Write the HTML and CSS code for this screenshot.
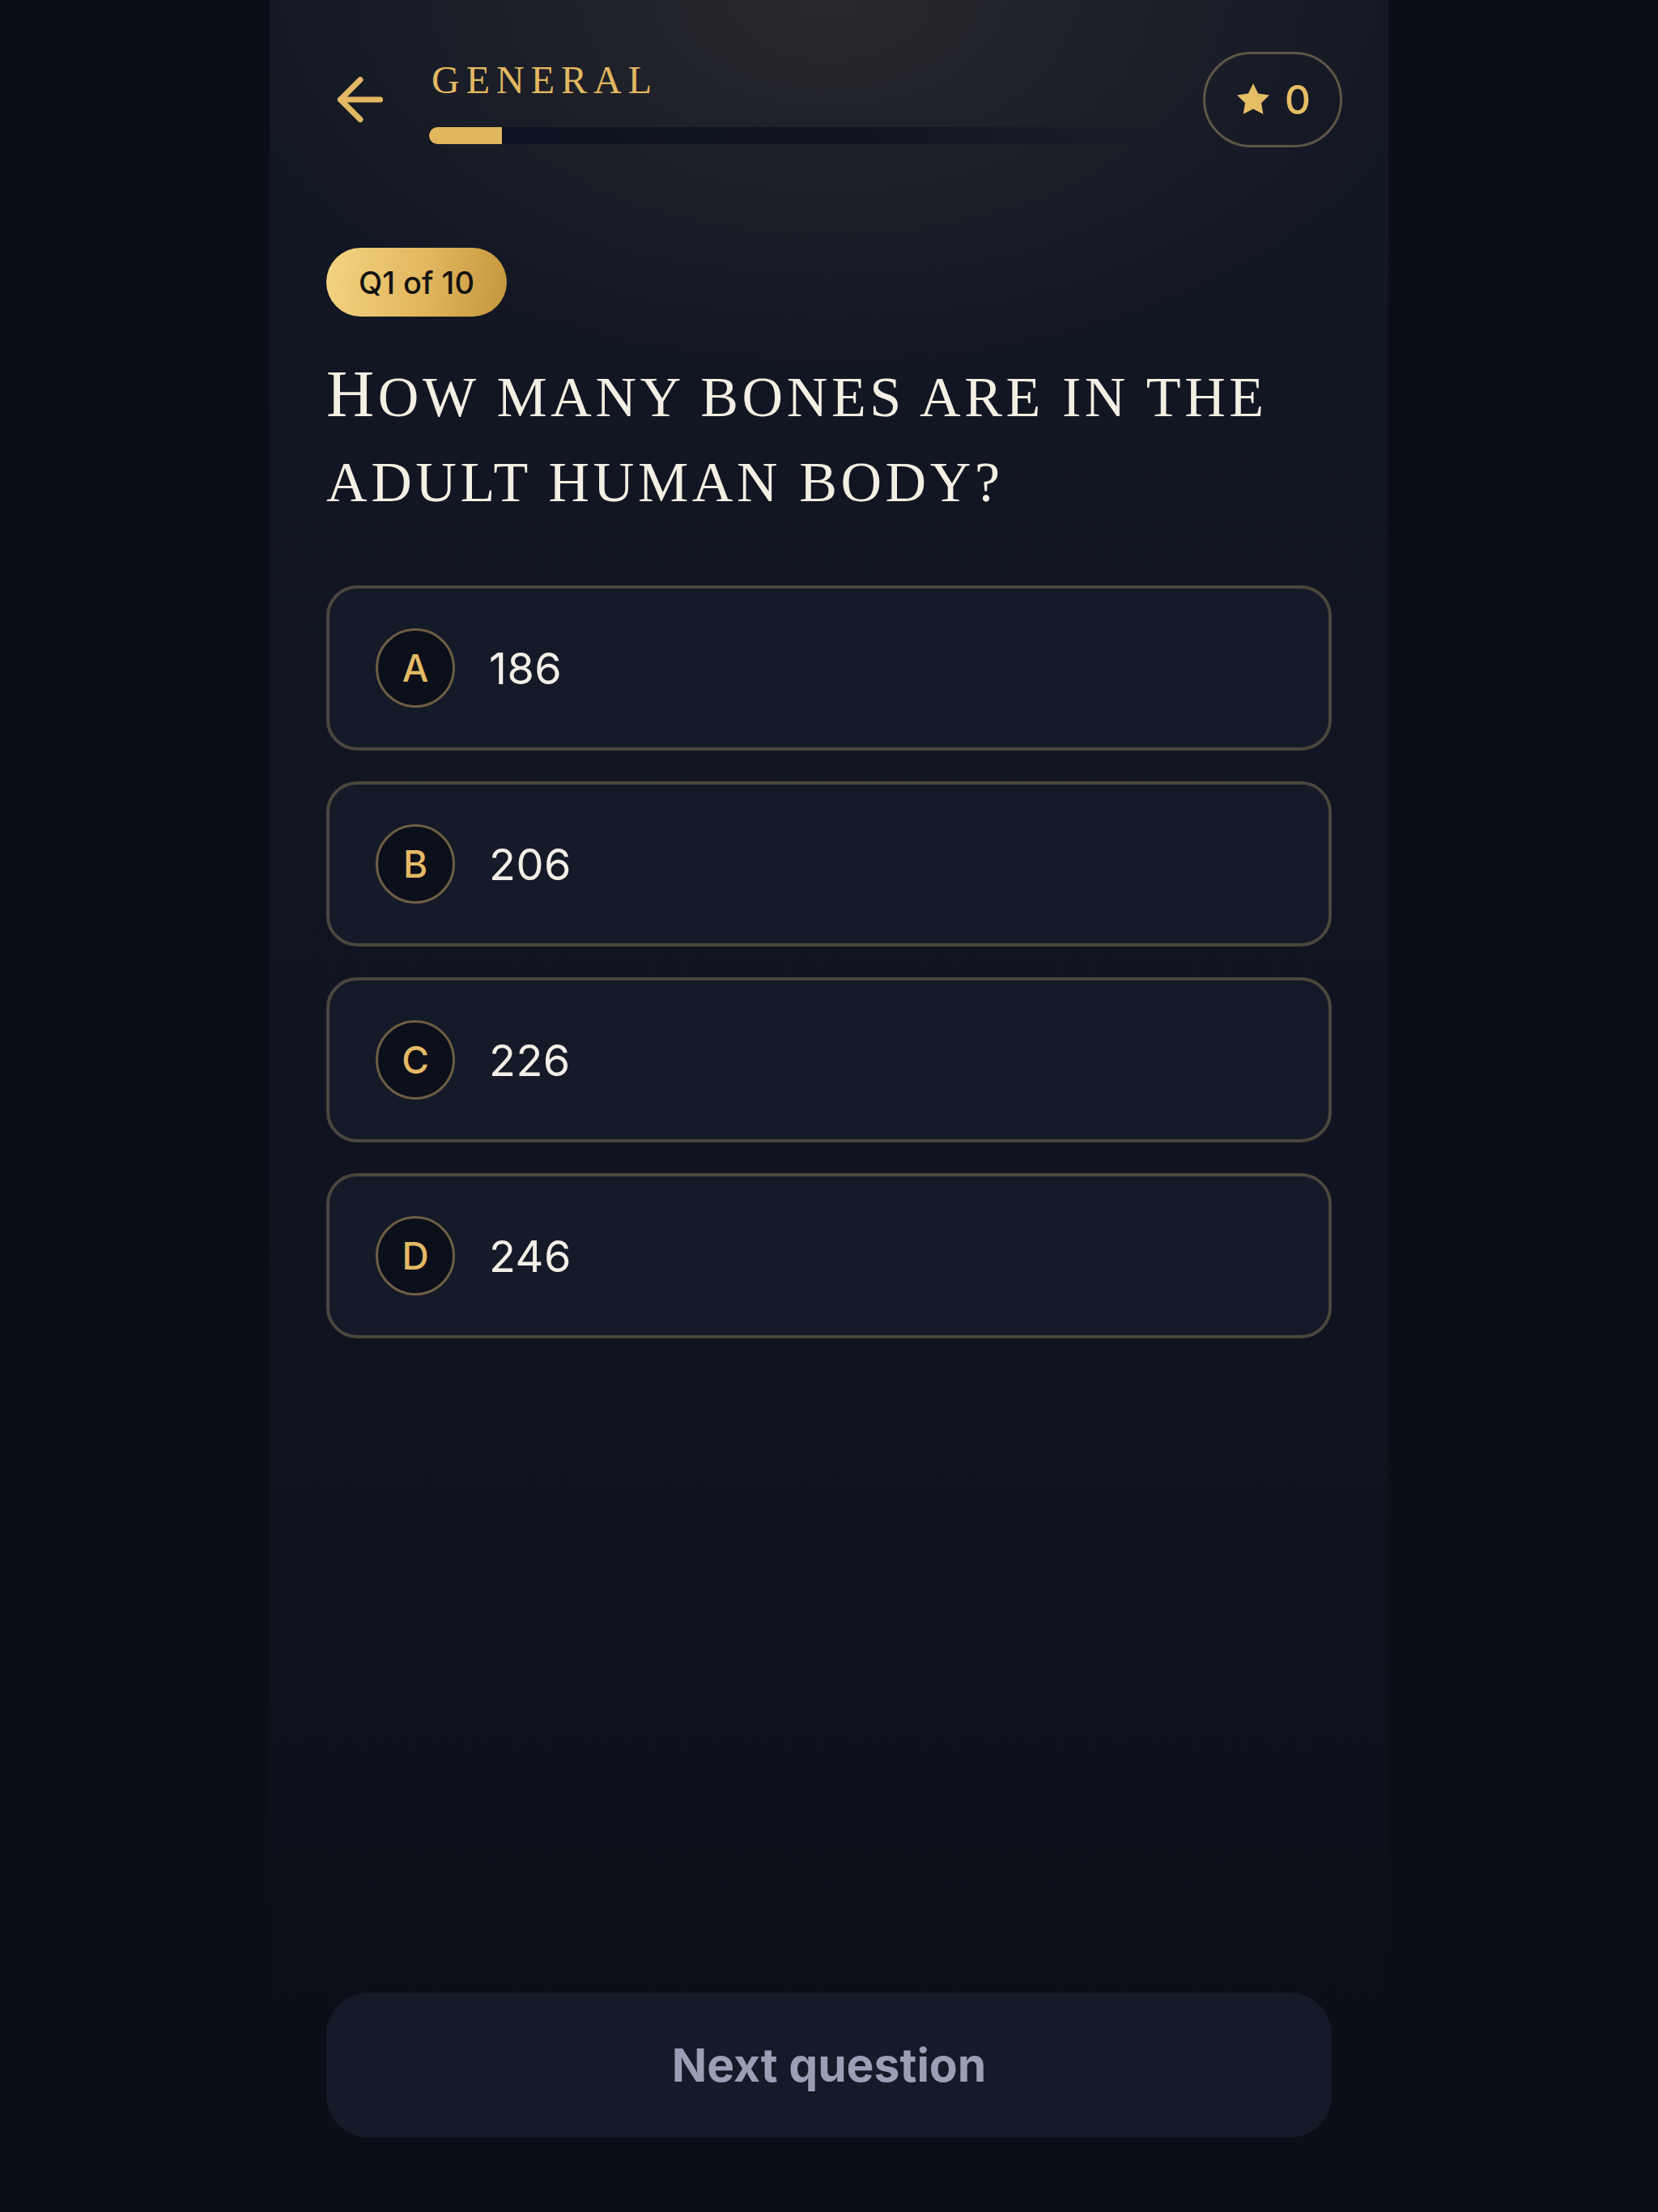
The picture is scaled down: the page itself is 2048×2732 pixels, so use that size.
FILE: index.html
```html
<!DOCTYPE html>
<html lang="en">
<head>
<meta charset="utf-8">
<title>Quiz</title>
<link rel="stylesheet" href="styles.css">
</head>
<body>
<div class="page">
  <main class="column">
    <header class="topbar">
      <button class="back" aria-label="Back">
        <svg viewBox="0 0 24 24" width="84" height="84" fill="none" stroke="currentColor" stroke-width="2" stroke-linecap="round" stroke-linejoin="round"><path d="M19 12H5"/><path d="M12 19l-7-7 7-7"/></svg>
      </button>
      <div class="title-block">
        <div class="category">GENERAL</div>
        <div class="progress"><div class="progress-fill" style="width: 90px"></div></div>
      </div>
      <div class="score">
        <svg viewBox="0 0 24 24" width="48" height="48"><polygon fill="currentColor" points="12,2 15.09,8.26 22,9.27 17,14.14 18.18,21.02 12,17.77 5.82,21.02 7,14.14 2,9.27 8.91,8.26"/></svg>
        <span class="score-num">0</span>
      </div>
    </header>

    <section class="content">
      <div class="badge">Q1 of 10</div>
      <h1 class="question">How many bones are in the adult human body?</h1>
      <div class="options">
        <div class="option"><span class="letter">A</span><span class="answer">186</span></div>
        <div class="option"><span class="letter">B</span><span class="answer">206</span></div>
        <div class="option"><span class="letter">C</span><span class="answer">226</span></div>
        <div class="option"><span class="letter">D</span><span class="answer">246</span></div>
      </div>
    </section>

    <div class="footer">
      <button class="next">Next question</button>
    </div>
  </main>
</div>
</body>
</html>
```

FILE: styles.css
```css
* { box-sizing: border-box; }

html, body {
  margin: 0;
  padding: 0;
  background: #0b0e17;
}

body {
  font-family: Inter, "Noto Sans", sans-serif;
  color: #f1ede4;
}

.page {
  display: flex;
  justify-content: center;
  min-height: 2732px;
}

.column {
  width: 1382px;
  min-height: 2732px;
  display: flex;
  flex-direction: column;
  background:
    radial-gradient(ellipse 760px 460px at 50% 0, rgba(58, 55, 52, 0.55), rgba(58, 55, 52, 0) 100%),
    linear-gradient(to bottom, #121724 0%, #111522 40%, #0f131e 65%, #0b0e17 92%);
}

.topbar {
  display: flex;
  align-items: center;
  padding: 64px 57px 0 70px;
}

.back {
  width: 84px;
  height: 84px;
  padding: 0;
  border: 0;
  background: none;
  color: #e3b862;
  display: flex;
  align-items: center;
  justify-content: center;
  flex: none;
}

.title-block {
  flex: 1;
  margin-left: 43px;
  margin-right: 40px;
  padding-top: 7px;
  display: flex;
  flex-direction: column;
  gap: 34px;
}

.category {
  font-family: "Liberation Serif", "Times New Roman", serif;
  font-size: 48px;
  line-height: 48px;
  letter-spacing: 8px;
  color: #e3b862;
  padding-left: 3px;
}

.progress {
  height: 21px;
  background: linear-gradient(to right, rgba(10, 15, 30, 0.85) 0%, rgba(10, 15, 30, 0.7) 60%, rgba(10, 15, 30, 0) 100%);
}

.progress-fill {
  height: 100%;
  background: #e1b75e;
  border-radius: 11px 0 0 11px;
}

.score {
  flex: none;
  height: 118px;
  border: 3px solid #5e5647;
  border-radius: 59px;
  padding: 0 36px 0 35px;
  display: flex;
  align-items: center;
  gap: 15px;
  color: #e5bd64;
}

.score-num {
  font-size: 50px;
  font-weight: 500;
  line-height: 1;
}

.content {
  padding: 124px 70px 0;
  display: flex;
  flex-direction: column;
  align-items: flex-start;
}

.badge {
  height: 85px;
  padding: 0 40px;
  border-radius: 43px;
  background: linear-gradient(100deg, #f4d482 0%, #e2b65e 55%, #c4963d 100%);
  color: #121212;
  font-size: 38px;
  font-weight: 500;
  display: flex;
  align-items: center;
}

.question {
  margin: 43px 0 0;
  font-family: "Liberation Serif", "Times New Roman", serif;
  font-weight: 400;
  font-size: 70px;
  line-height: 105px;
  letter-spacing: 4.6px;
  text-transform: uppercase;
  color: #f4efe3;
}

.question::first-letter {
  font-size: 82px;
}

.options {
  align-self: stretch;
  margin-top: 75px;
  display: flex;
  flex-direction: column;
  gap: 38px;
}

.option {
  height: 204px;
  border: 4px solid #4b473e;
  border-radius: 38px;
  background: #141a28;
  padding-left: 57px;
  display: flex;
  align-items: center;
  gap: 42px;
}

.letter {
  width: 98px;
  height: 98px;
  flex: none;
  border: 3px solid #6e5e43;
  border-radius: 50%;
  background: #0b0f1a;
  color: #e4b964;
  font-size: 46px;
  font-weight: 500;
  display: flex;
  align-items: center;
  justify-content: center;
}

.answer {
  font-size: 54px;
  font-weight: 400;
  color: #f3efe7;
  letter-spacing: 0.5px;
}

.footer {
  margin-top: auto;
  padding: 0 70px 92px;
}

.next {
  width: 100%;
  height: 179px;
  border: 0;
  border-radius: 52px;
  background: #151a28;
  color: #9a9fb6;
  font-family: Inter, "Noto Sans", sans-serif;
  font-size: 57px;
  font-weight: 700;
}
```
